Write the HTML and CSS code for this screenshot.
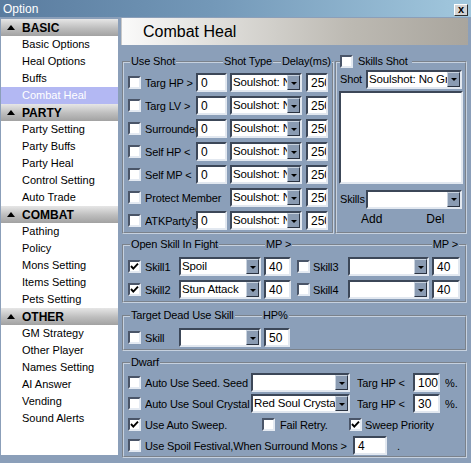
FILE: index.html
```html
<!DOCTYPE html>
<html>
<head>
<meta charset="utf-8">
<title>Option</title>
<link rel="stylesheet" href="styles.css">
</head>
<body>
<div class="window">
  <div class="titlebar">
    <span class="title">Option</span>
    <span class="close">x</span>
  </div>
  <div class="main">
    <div class="sidebar">
      <div class="cat"><span class="arrow"></span>BASIC</div>
      <div class="item">Basic Options</div>
      <div class="item">Heal Options</div>
      <div class="item">Buffs</div>
      <div class="item cur">Combat Heal</div>
      <div class="cat"><span class="arrow"></span>PARTY</div>
      <div class="item">Party Setting</div>
      <div class="item">Party Buffs</div>
      <div class="item">Party Heal</div>
      <div class="item">Control Setting</div>
      <div class="item">Auto Trade</div>
      <div class="cat"><span class="arrow"></span>COMBAT</div>
      <div class="item">Pathing</div>
      <div class="item">Policy</div>
      <div class="item">Mons Setting</div>
      <div class="item">Items Setting</div>
      <div class="item">Pets Setting</div>
      <div class="cat"><span class="arrow"></span>OTHER</div>
      <div class="item">GM Strategy</div>
      <div class="item">Other Player</div>
      <div class="item">Names Setting</div>
      <div class="item">AI Answer</div>
      <div class="item">Vending</div>
      <div class="item">Sound Alerts</div>
    </div>
    <div class="content">
      <div class="pagehead">Combat Heal</div>
      <div class="toprow">
        <fieldset class="grp useshot">
          <legend class="lg">
            <span class="lgpart w99"><span class="seg lead"></span><span class="lt">Use Shot</span><span class="seg fill"></span></span><span class="lt">Shot Type</span><span class="seg w8"></span><span class="lt">Delay(ms)</span><span class="seg fill"></span>
          </legend>
          <div class="gbody us-body">
            <div class="row"><span class="chk"></span><span class="lbl w51">Targ HP &gt;</span><span class="tx w31">0</span><div class="sel w72 ml3"><span class="v">Soulshot: No Grade</span><span class="btn"></span></div><span class="tx w22 ml4">250</span></div>
            <div class="row"><span class="chk"></span><span class="lbl w51">Targ LV &gt;</span><span class="tx w31">0</span><div class="sel w72 ml3"><span class="v">Soulshot: No Grade</span><span class="btn"></span></div><span class="tx w22 ml4">250</span></div>
            <div class="row"><span class="chk"></span><span class="lbl w51">Surrounded</span><span class="tx w31">0</span><div class="sel w72 ml3"><span class="v">Soulshot: No Grade</span><span class="btn"></span></div><span class="tx w22 ml4">250</span></div>
            <div class="row"><span class="chk"></span><span class="lbl w51">Self HP &lt;</span><span class="tx w31">0</span><div class="sel w72 ml3"><span class="v">Soulshot: No Grade</span><span class="btn"></span></div><span class="tx w22 ml4">250</span></div>
            <div class="row"><span class="chk"></span><span class="lbl w51">Self MP &lt;</span><span class="tx w31">0</span><div class="sel w72 ml3"><span class="v">Soulshot: No Grade</span><span class="btn"></span></div><span class="tx w22 ml4">250</span></div>
            <div class="row"><span class="chk"></span><span class="lbl w85">Protect Member</span><div class="sel w72"><span class="v">Soulshot: No Grade</span><span class="btn"></span></div><span class="tx w22 ml4">250</span></div>
            <div class="row"><span class="chk"></span><span class="lbl w51">ATKParty's</span><span class="tx w31">0</span><div class="sel w72 ml3"><span class="v">Soulshot: No Grade</span><span class="btn"></span></div><span class="tx w22 ml4">250</span></div>
          </div>
        </fieldset>
        <fieldset class="grp skillshot">
          <legend class="lg">
            <span class="seg lead3"></span><span class="chk"></span><span class="lt sk">Skills Shot</span><span class="seg fill"></span>
          </legend>
          <div class="gbody ss-body">
            <div class="ssrow"><span class="lbl w26">Shot</span><div class="sel w96"><span class="v">Soulshot: No Grade</span><span class="btn"></span></div></div>
            <div class="listbox"></div>
            <div class="ssrow skrow"><span class="lbl w26">Skills</span><div class="sel w96"><span class="v"></span><span class="btn"></span></div></div>
            <div class="addrow"><span class="add">Add</span><span class="del">Del</span></div>
          </div>
        </fieldset>
      </div>

      <fieldset class="grp openskill">
        <legend class="lg">
          <span class="lgpart w141"><span class="seg lead"></span><span class="lt">Open Skill In Fight</span><span class="seg fill"></span></span><span class="lt">MP &gt;</span><span class="seg fill"></span><span class="lt">MP &gt;</span><span class="seg w6"></span>
        </legend>
        <div class="gbody os-body">
          <div class="row"><span class="chk on"><svg viewBox="0 0 9 9" width="9" height="9"><polyline points="1,4 3.3,6.6 8,1.6" fill="none" stroke="#000" stroke-width="1.9"/></svg></span><span class="lbl w34">Skill1</span><div class="sel w82"><span class="v">Spoil</span><span class="btn"></span></div><span class="tx w27 ml3">40</span><span class="chk ml6"></span><span class="lbl w35 ml3">Skill3</span><div class="sel w81"><span class="v"></span><span class="btn"></span></div><span class="tx w28 ml3">40</span></div>
          <div class="row"><span class="chk on"><svg viewBox="0 0 9 9" width="9" height="9"><polyline points="1,4 3.3,6.6 8,1.6" fill="none" stroke="#000" stroke-width="1.9"/></svg></span><span class="lbl w34">Skill2</span><div class="sel w82"><span class="v">Stun Attack</span><span class="btn"></span></div><span class="tx w27 ml3">40</span><span class="chk ml6"></span><span class="lbl w35 ml3">Skill4</span><div class="sel w81"><span class="v"></span><span class="btn"></span></div><span class="tx w28 ml3">40</span></div>
        </div>
      </fieldset>

      <fieldset class="grp targetdead">
        <legend class="lg">
          <span class="lgpart w138"><span class="seg lead"></span><span class="lt">Target Dead Use Skill</span><span class="seg fill"></span></span><span class="lt">HP%</span><span class="seg fill"></span>
        </legend>
        <div class="gbody td-body">
          <div class="row"><span class="chk"></span><span class="lbl w34">Skill</span><div class="sel w82"><span class="v"></span><span class="btn"></span></div><span class="tx w26 ml3">50</span></div>
        </div>
      </fieldset>

      <fieldset class="grp dwarf">
        <legend class="lg">
          <span class="seg lead"></span><span class="lt">Dwarf</span><span class="seg fill"></span>
        </legend>
        <div class="gbody dw-body">
          <div class="drow"><span class="chk"></span><span class="lbl w106">Auto Use Seed. Seed</span><div class="sel w99"><span class="v"></span><span class="btn"></span></div><span class="lbl w56 ml7">Targ HP &lt;</span><span class="tx w27">100</span><span class="lbl ml5">%.</span></div>
          <div class="drow"><span class="chk"></span><span class="lbl w106">Auto Use Soul Crystal</span><div class="sel w99"><span class="v">Red Soul Crystal</span><span class="btn"></span></div><span class="lbl w56 ml7">Targ HP &lt;</span><span class="tx w27">30</span><span class="lbl ml5">%.</span></div>
          <div class="drow"><span class="chk on"><svg viewBox="0 0 9 9" width="9" height="9"><polyline points="1,4 3.3,6.6 8,1.6" fill="none" stroke="#000" stroke-width="1.9"/></svg></span><span class="lbl w117">Use Auto Sweep.</span><span class="chk"></span><span class="lbl w69 ml5">Fail Retry.</span><span class="chk on"><svg viewBox="0 0 9 9" width="9" height="9"><polyline points="1,4 3.3,6.6 8,1.6" fill="none" stroke="#000" stroke-width="1.9"/></svg></span><span class="lbl ml3">Sweep Priority</span></div>
          <div class="drow"><span class="chk"></span><span class="lbl w208">Use Spoil Festival,When Surround Mons &gt;</span><span class="tx w34">4</span><span class="lbl ml10">.</span></div>
        </div>
      </fieldset>
    </div>
  </div>
</div>
</body>
</html>
```
FILE: styles.css
```css
* { box-sizing: border-box; }
html, body { margin: 0; padding: 0; }
body {
  width: 471px;
  height: 463px;
  overflow: hidden;
  background: #8b9fb9;
  font-family: "Liberation Sans", Arial, sans-serif;
  font-size: 11px;
  letter-spacing: -0.15px;
  color: #000;
}
.window {
  width: 471px;
  height: 463px;
  display: flex;
  flex-direction: column;
  background: #8b9fb9;
}
.titlebar {
  height: 17px;
  flex: none;
  display: flex;
  align-items: center;
  justify-content: space-between;
  padding: 0 3px 0 3px;
  background: linear-gradient(90deg, #5a7c9f 0%, #7398b8 45%, #a2c8de 100%);
  color: #fff;
  font-size: 12px;
  letter-spacing: 0;
}
.close {
  width: 14px;
  height: 12px;
  margin-top: 3px;
  background: #d4d4d4;
  border: 1px solid;
  border-color: #fff #303030 #303030 #fff;
  color: #000;
  font-weight: bold;
  font-size: 11px;
  line-height: 9px;
  text-align: center;
}
.main { flex: 1; display: flex; min-height: 0; }
.sidebar {
  width: 117px;
  height: 436px;
  margin: 2px 0 0 1px;
  background: #fff;
  flex: none;
}
.cat {
  height: 17px;
  display: flex;
  align-items: center;
  padding-left: 6px;
  font-weight: bold;
  font-size: 12px;
  letter-spacing: 0;
  background: linear-gradient(#e6e6e6, #bdbdbd 55%, #a2a2a2);
}
.arrow {
  width: 0;
  height: 0;
  border-left: 4px solid transparent;
  border-right: 4px solid transparent;
  border-bottom: 5px solid #000;
  margin-right: 7px;
}
.item {
  height: 17px;
  line-height: 17px;
  padding-left: 21px;
  white-space: nowrap;
  letter-spacing: 0;
}
.item.cur { background: #b3b8f3; color: #fff; }

.content {
  flex: 1;
  padding: 1px 4px 0 4px;
  min-width: 0;
}
.pagehead {
  height: 27px;
  margin: 0 -1px 0 -1px;
  padding-left: 21px;
  display: flex;
  align-items: center;
  font-size: 16px;
  letter-spacing: 0;
  background: linear-gradient(90deg, #fafafa 0%, #e2e1de 25%, #bdbab3 65%, #a9a59d 100%);
  border-left: 1px solid #c9c9c9;
}
.toprow {
  display: flex;
  margin-top: 10px;
  gap: 1px;
}
.grp {
  margin: 0;
  padding: 0;
  min-width: 0;
  border: 2px groove #c6d1df;
}
.lg {
  padding: 0;
  width: 100%;
  height: 13px;
  line-height: 13px;
  display: flex;
  align-items: center;
  white-space: nowrap;
}
.lgpart { display: flex; align-items: center; flex: none; }
.seg { height: 0; border-top: 2px groove #c6d1df; flex: none; }
.seg.fill { flex: 1; }
.seg.lead { width: 6px; }
.seg.lead3 { width: 3px; }
.seg.w6 { width: 6px; }
.seg.w8 { width: 8px; }
.lt { padding: 0 1px 0 1px; flex: none; }
.lt.sk { margin-left: 4px; padding-right: 4px; }
.w99 { width: 99px; }
.w141 { width: 141px; }
.w138 { width: 138px; }

.useshot { width: 212px; flex: none; }
.skillshot { flex: 1; }
.gbody { padding-left: 4px; }
.us-body { padding-top: 3px; }
.row { display: flex; align-items: center; height: 23px; }
.drow { display: flex; align-items: center; height: 21px; }

.chk {
  width: 13px;
  height: 13px;
  flex: none;
  background: #fff;
  border: 2px solid;
  border-color: #4a5568 #e4eaf2 #e4eaf2 #4a5568;
  display: flex;
  align-items: center;
  justify-content: center;
}
.chk svg { display: block; }
.lbl {
  flex: none;
  margin-left: 4px;
  white-space: nowrap;
  overflow: hidden;
}
.tx {
  flex: none;
  height: 19px;
  background: #fff;
  border: 2px solid;
  border-color: #3c4758 #e2e8f0 #e2e8f0 #3c4758;
  padding-left: 3px;
  display: flex;
  align-items: center;
  overflow: hidden;
  white-space: nowrap;
  font-size: 12px;
  letter-spacing: 0;
}
.sel {
  flex: none;
  height: 19px;
  display: flex;
  background: #fff;
  border: 2px solid;
  border-color: #3c4758 #e2e8f0 #e2e8f0 #3c4758;
  font-size: 11.5px;
}
.sel .v {
  flex: 1;
  min-width: 0;
  padding-left: 1px;
  overflow: hidden;
  white-space: nowrap;
  line-height: 15px;
}
.sel .btn {
  width: 13px;
  flex: none;
  background: #8a9bb2;
  border: 1px solid;
  border-color: #c9d3df #2a3240 #2a3240 #c9d3df;
  display: flex;
  align-items: center;
  justify-content: center;
}
.sel .btn::after {
  content: "";
  width: 0;
  height: 0;
  border-left: 3px solid transparent;
  border-right: 3px solid transparent;
  border-top: 3px solid #000;
  margin-top: 1px;
}

.w22 { width: 22px; }
.w26 { width: 26px; }
.w27 { width: 27px; }
.w28 { width: 28px; }
.w31 { width: 31px; }
.w34 { width: 34px; }
.w35 { width: 35px; }
.w51 { width: 51px; }
.w56 { width: 56px; }
.w69 { width: 69px; }
.w72 { width: 72px; }
.w81 { width: 81px; }
.w82 { width: 82px; }
.w85 { width: 85px; }
.w96 { width: 96px; }
.w99 { width: 99px; }
.w106 { width: 106px; }
.w117 { width: 117px; }
.w208 { width: 208px; }
.ml3 { margin-left: 3px; }
.ml4 { margin-left: 4px; }
.ml5 { margin-left: 5px; }
.ml6 { margin-left: 6px; }
.ml7 { margin-left: 7px; }
.ml10 { margin-left: 10px; }

.ss-body { padding: 1px 2px 0 2px; }
.ssrow { display: flex; align-items: center; height: 20px; }
.ssrow .lbl { margin-left: 1px; }
.listbox {
  margin-top: 2px;
  height: 93px;
  width: 124px;
  background: #fff;
  border: 2px solid;
  border-color: #3c4758 #e2e8f0 #e2e8f0 #3c4758;
}
.skrow { margin-top: 4px; height: 22px; }
.addrow {
  height: 18px;
  display: flex;
  align-items: center;
  font-size: 12px;
  letter-spacing: 0;
}
.add { margin-left: 22px; }
.del { margin-left: 44px; }

.openskill { margin-top: 4px; }
.os-body { padding-top: 4px; }
.targetdead { margin-top: 6px; }
.td-body { padding-top: 4px; }
.dwarf { margin-top: 5px; }
.dw-body { padding-top: 3px; }
```
